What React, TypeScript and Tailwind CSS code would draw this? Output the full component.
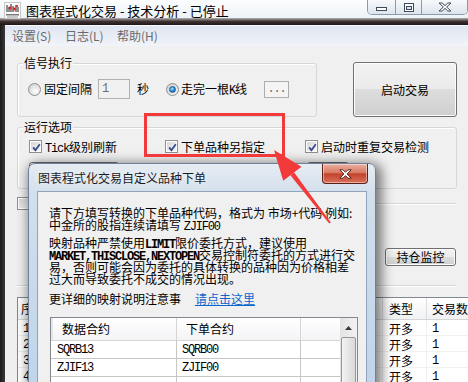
import React from "react";

const mono = "font-['Liberation_Mono',monospace] tracking-[-1.2px] leading-none";
const btn =
  "rounded-[3px] border border-[#707070] bg-[linear-gradient(#f2f2f2,#ebebeb_50%,#dddddd_50%,#cfcfcf)] shadow-[inset_0_0_0_1px_#fcfcfc]";

function Mono({ children, bold = false }: { children: React.ReactNode; bold?: boolean }) {
  return <span className={bold ? mono + " font-bold" : mono}>{children}</span>;
}

function Line({ children }: { children: React.ReactNode }) {
  return <div className="h-[12px] whitespace-nowrap leading-[12px]">{children}</div>;
}

function CheckBox({ checked = false }: { checked?: boolean }) {
  return (
    <span className="relative flex h-[13px] w-[13px] shrink-0 border border-[#8e8f8f] bg-white p-[1px]">
      <span className="h-full w-full bg-linear-to-br from-[#d6d6d6] to-[#f7f7f7]" />
      {checked && (
        <svg className="absolute left-[1px] top-[1px]" width="11" height="11" viewBox="0 0 11 11">
          <path d="M2.2 5.4 L4.4 8.2 L8.8 2.2" fill="none" stroke="#34498f" strokeWidth="1.8" />
        </svg>
      )}
    </span>
  );
}

function Radio({ checked = false }: { checked?: boolean }) {
  return (
    <span className="flex h-[13px] w-[13px] shrink-0 items-center justify-center rounded-full border border-[#8e8f8f] bg-[radial-gradient(circle_at_60%_65%,#ffffff,#e6e6e6_45%,#c4c4c4)]">
      {checked && (
        <span className="h-[7px] w-[7px] rounded-full border border-[#1b5a90] bg-[radial-gradient(circle_at_40%_35%,#b5ecff_0%,#2f95dc_45%,#0b4a86_100%)]" />
      )}
    </span>
  );
}

function AppIcon() {
  return (
    <svg width="17" height="17" viewBox="0 0 17 17" className="ml-[4px] mt-[2px] shrink-0">
      <rect x="0.5" y="0.5" width="16" height="16" fill="#fafafa" stroke="#c8c8c8" />
      <path d="M3 3v7M5 5v5M7 2v8M9 4v6M12 3v7M14 5v5" stroke="#222" strokeWidth="1" />
      <circle cx="6" cy="6" r="1.4" fill="#e02020" />
      <circle cx="10.5" cy="7" r="1.4" fill="#e02020" />
      <circle cx="13" cy="4" r="1.1" fill="#e02020" />
      <rect x="2" y="12" width="13" height="1.5" fill="#777" />
      <rect x="3" y="14.5" width="11" height="1" fill="#999" />
    </svg>
  );
}

function WindowControls() {
  return (
    <div className="ml-auto flex h-[15px] overflow-hidden rounded-b-[5px] border border-t-0 border-[#8d9aab] shadow-[inset_0_-1px_0_#ffffff]">
      <div className="flex w-[28px] items-end justify-center border-r border-[#8d9aab] bg-linear-to-b from-[#f7f9fb] to-[#dde4ec] pb-[3px]">
        <svg width="11" height="4" viewBox="0 0 11 4">
          <rect x="0.5" y="0.5" width="10" height="3" fill="#ffffff" stroke="#3d4b5c" />
        </svg>
      </div>
      <div className="flex w-[26px] items-center justify-center border-r border-[#8d9aab] bg-linear-to-b from-[#f7f9fb] to-[#dde4ec]">
        <svg width="10" height="9" viewBox="0 0 10 9">
          <rect x="0.5" y="0.5" width="9" height="8" fill="#ffffff" stroke="#3d4b5c" />
          <rect x="2.5" y="3.5" width="5" height="3" fill="#dde4ec" stroke="#3d4b5c" />
        </svg>
      </div>
      <div className="flex w-[45px] items-center justify-center bg-linear-to-b from-[#f7f9fb] to-[#dde4ec]">
        <svg width="14" height="10" viewBox="0 0 14 10">
          <path
            d="M1 1h3.2L7 3.6 9.8 1H13L8.6 5 13 9H9.8L7 6.4 4.2 9H1l4.4-4z"
            fill="#ffffff"
            stroke="#3d4b5c"
            strokeWidth="1"
            strokeLinejoin="round"
          />
        </svg>
      </div>
    </div>
  );
}

function GroupLabel({ children }: { children: React.ReactNode }) {
  return (
    <span className="absolute left-[5px] top-[-10px] bg-[#f0f0f0] px-[1px] leading-[17px]">{children}</span>
  );
}

const mainRows = [1, 2, 3, 4];

const mapRows = [
  { data: "SQRB13", order: "SQRB00" },
  { data: "ZJIF13", order: "ZJIF00" },
  { data: "", order: "" },
];

function MappingDialog() {
  return (
    <div className="absolute left-[28px] top-[163px] h-[240px] w-[348px] rounded-t-[7px] border border-[#6d819a] bg-[linear-gradient(#e6ecf2,#d2dfec_30px,#bed3ea)] shadow-[3px_3px_12px_3px_rgba(0,0,0,0.5)]">
      <div className="flex h-[27px] items-start">
        <span className="ml-[9px] mt-[6px] leading-[16px] text-[#1b1b1b] [text-shadow:0_0_6px_#ffffff]">
          图表程式化交易自定义品种下单
        </span>
        <div className="ml-auto mr-[7px] flex h-[20px] w-[46px] items-center justify-center rounded-b-[4px] border border-t-0 border-[#5e1f14] bg-[linear-gradient(#eab0a2,#d97a64_45%,#c3432b_52%,#d8705a)] shadow-[inset_0_0_0_1px_rgba(255,255,255,0.45)]">
          <svg width="13" height="10" viewBox="0 0 13 10">
            <path
              d="M0.8 0.8h3.2L6.5 3.3 9 0.8h3.2L8.1 5l4.1 4.2H9L6.5 6.7 4 9.2H0.8L4.9 5z"
              fill="#ffffff"
              stroke="#4a1a12"
              strokeWidth="0.9"
              strokeLinejoin="round"
            />
          </svg>
        </div>
      </div>
      <div className="ml-[8px] h-[220px] w-[330px] border border-[#8fa3ba] bg-[#f0f0f0] pl-[11px] pt-[15px] text-black">
        <div>
          <Line>请下方填写转换的下单品种代码，格式为 市场+代码 例如:</Line>
          <Line>
            中金所的股指连续请填写 <Mono>ZJIF00</Mono>
          </Line>
        </div>
        <div className="mt-[6px]">
          <Line>
            映射品种严禁使用<Mono bold>LIMIT</Mono>限价委托方式，建议使用
          </Line>
          <Line>
            <Mono bold>MARKET,THISCLOSE,NEXTOPEN</Mono>交易控制符委托的方式进行交
          </Line>
          <Line>易，否则可能会因为委托的具体转换的品种因为价格相差</Line>
          <Line>过大而导致委托不成交的情况出现。</Line>
        </div>
        <div className="mt-[8px] flex h-[12px] whitespace-nowrap leading-[12px]">
          <span>更详细的映射说明注意事</span>
          <span className="ml-[14px] text-[#0a66cc] underline">请点击这里</span>
        </div>
        <div className="ml-[1px] mt-[12px] flex w-[308px] border border-[#828790] bg-white">
          <div className="w-[289px]">
            <div className="grid h-[23px] grid-cols-[126px_124px_39px] border-b border-[#d5d5d5] bg-linear-to-b from-[#ffffff] to-[#f3f4f6]">
              <div className="flex items-center border-r border-[#d5d5d5] pl-[11px] shadow-[inset_2px_0_0_#e6e6e6]">数据合约</div>
              <div className="flex items-center border-r border-[#d5d5d5] pl-[9px]">下单合约</div>
              <div />
            </div>
            {mapRows.map((r, i) => (
              <div key={i} className="grid h-[18px] grid-cols-[126px_124px_39px] border-b border-[#c6c6c6]">
                <div className="flex items-center border-r border-[#c6c6c6] pl-[6px]">
                  <Mono>{r.data}</Mono>
                </div>
                <div className="flex items-center border-r border-[#c6c6c6] pl-[5px]">
                  <Mono>{r.order}</Mono>
                </div>
                <div />
              </div>
            ))}
          </div>
          <div className="flex w-[17px] flex-col bg-linear-to-r from-[#e3e3e3] to-[#f2f2f2]">
            <div className="flex h-[19px] items-center justify-center">
              <svg width="7" height="4" viewBox="0 0 7 4">
                <path d="M0 4 L3.5 0 L7 4z" fill="#3a3a3a" />
              </svg>
            </div>
            <div className="mx-[1px] h-[60px] rounded-[2px] border border-[#979797] bg-linear-to-r from-[#f3f3f3] to-[#d9d9d9]" />
          </div>
        </div>
      </div>
    </div>
  );
}

function Annotation() {
  return (
    <>
      <div className="absolute left-[144px] top-[113px] h-[44px] w-[141px] border-[3px] border-[#f23a3a]" />
      <svg className="pointer-events-none absolute left-0 top-0" width="468" height="382" viewBox="0 0 468 382">
        <polygon points="274,150 301.5,166.8 283.2,180.8" fill="#f23a3a" />
        <polygon points="294.2,172.4 290.4,175.3 329.2,223.6 330.8,222.4" fill="#f23a3a" />
      </svg>
    </>
  );
}

export default function App() {
  return (
    <div className="relative h-[382px] w-[468px] overflow-hidden bg-[#f0f0f0] font-['Noto_Sans_CJK_SC','Liberation_Sans',sans-serif] text-[12px] text-black">
      {/* title bar */}
      <div className="flex h-[18px] bg-linear-to-b from-[#fcfdfe] to-[#edf3f8]">
        <AppIcon />
        <span className="ml-[5px] mt-[2px] whitespace-nowrap text-[13px] leading-[18px]">
          图表程式化交易 - 技术分析 - 已停止
        </span>
        <WindowControls />
      </div>
      <div className="h-[7px] bg-linear-to-b from-[#b5b5b5] via-[#3e3030] to-[#1d1616]" />

      <div className="flex">
        <div className="h-[357px] w-[5px] shrink-0 bg-linear-to-r from-[#1a1a1a] to-[#3a3a3a]" />
        <div className="flex min-w-0 flex-1 flex-col">
          {/* menu */}
          <div className="flex h-[21px] shrink-0 items-center border-t border-[#f8f9fc] bg-linear-to-b from-[#dfe5f1] to-[#f1f4f9] pl-[7px] text-[#6a6a6a]">
            <span className="w-[53px]">设置(S)</span>
            <span className="w-[52px]">日志(L)</span>
            <span>帮助(H)</span>
          </div>

          <div className="flex flex-col pl-[12px]">
            {/* signal group + start button */}
            <div className="mt-[17px] flex">
              <div className="relative h-[54px] w-[300px] rounded-[3px] border border-[#d3d8dc] pl-[10px] pt-[15px] shadow-[inset_1px_1px_0_#ffffff]">
                <GroupLabel>信号执行</GroupLabel>
                <div className="flex h-[20px] items-center whitespace-nowrap">
                  <Radio />
                  <span className="ml-[3px]">固定间隔</span>
                  <div className="ml-[6px] flex h-[20px] w-[32px] items-center border border-[#adb2b5] bg-[#f0f0f0] pl-[3px] text-[#6d6d6d]">
                    <Mono>1</Mono>
                  </div>
                  <span className="ml-[7px]">秒</span>
                  <span className="ml-[17px]">
                    <Radio checked />
                  </span>
                  <span className="ml-[2px]">
                    走完一根<Mono>K</Mono>线
                  </span>
                  <div className="ml-[17px] flex h-[17px] w-[25px] items-center justify-center border border-[#adadad] bg-[#f4f4f4] text-[#6d6d6d]">
                    <Mono>...</Mono>
                  </div>
                </div>
              </div>
              <div className={"ml-[36px] -mt-[1px] flex h-[55px] w-[104px] items-center justify-center " + btn}>启动交易</div>
            </div>

            {/* run options group */}
            <div className="relative mt-[10px] h-[62px] w-[440px] rounded-[3px] border border-[#d3d8dc] pl-[11px] pt-[12px] shadow-[inset_1px_1px_0_#ffffff]">
              <GroupLabel>运行选项</GroupLabel>
              <div className="flex h-[13px] items-center whitespace-nowrap">
                <span className="flex w-[136px] items-center">
                  <CheckBox checked />
                  <span className="ml-[3px]">
                    <Mono>Tick</Mono>级别刷新
                  </span>
                </span>
                <span className="flex w-[140px] items-center">
                  <CheckBox checked />
                  <span className="ml-[3px]">下单品种另指定</span>
                </span>
                <span className="flex items-center">
                  <CheckBox checked />
                  <span className="ml-[3px]">启动时重复交易检测</span>
                </span>
              </div>
              <div className="mt-[9px] flex">
                <div className={"h-[22px] w-[90px] " + btn} />
                <div className={"ml-[188px] h-[22px] w-[42px] " + btn} />
              </div>
            </div>

            {/* position section */}
            <div className="mt-[8px] flex h-[13px] items-center">
              <CheckBox />
              <div className="ml-[2px] mr-[12px] h-0 flex-1 border-t border-[#d3d8dc] shadow-[0_1px_0_#ffffff]" />
            </div>
            <div className={"mr-[12px] mt-[38px] flex h-[18px] w-[71px] items-center justify-center self-end " + btn}>持仓监控</div>
            <div className="mr-[12px] mt-[19px] h-0 border-t border-[#d3d8dc] shadow-[0_1px_0_#ffffff]" />

            {/* trade table */}
            <div className="mt-[11px] w-[470px] shrink-0 border-l border-t border-[#828790] bg-white">
              <div className="grid h-[22px] grid-cols-[36px_329px_44px_61px] border-b border-[#d5d5d5] bg-linear-to-b from-[#ffffff] to-[#f1f2f4]">
                <div className="flex items-center border-r border-[#dcdcdc] pl-[3px]">序号</div>
                <div className="flex items-center border-r border-[#dcdcdc] pl-[6px]">合约名称</div>
                <div className="flex items-center border-r border-[#dcdcdc] pl-[6px]">类型</div>
                <div className="flex items-center whitespace-nowrap pl-[5px]">交易数量</div>
              </div>
              {mainRows.map((n) => (
                <div key={n} className="grid h-[16px] grid-cols-[36px_329px_44px_61px] border-b border-[#f0f0f0]">
                  <div className="flex items-center border-r border-[#f0f0f0] pl-[5px]">
                    <Mono>{String(n)}</Mono>
                  </div>
                  <div className="border-r border-[#f0f0f0]" />
                  <div className="flex items-center border-r border-[#f0f0f0] pl-[6px]">开多</div>
                  <div className="flex items-center pl-[5px]">
                    <Mono>1</Mono>
                  </div>
                </div>
              ))}
            </div>
          </div>
        </div>
      </div>

      <MappingDialog />
      <Annotation />
    </div>
  );
}
